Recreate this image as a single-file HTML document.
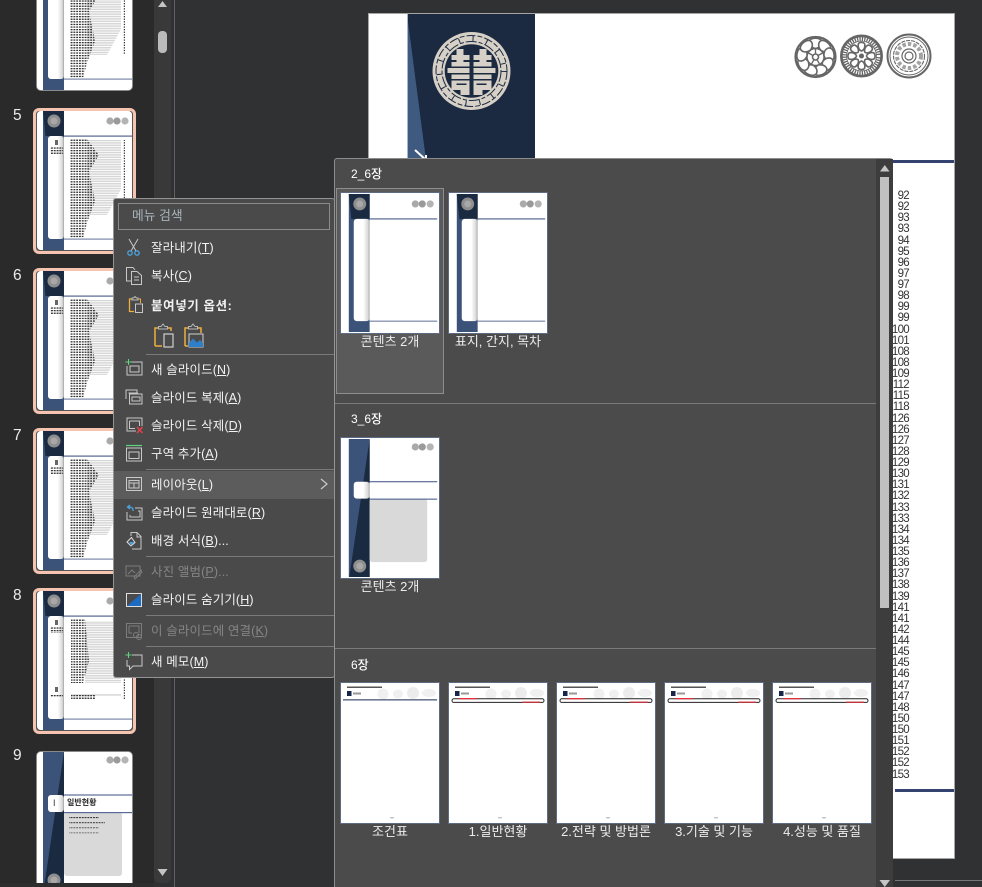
<!DOCTYPE html>
<html lang="ko"><head><meta charset="utf-8"><title>Layout</title>
<style>
html,body{margin:0;padding:0;width:982px;height:887px;overflow:hidden;background:#2f3133}
body{position:relative;font-family:"Liberation Sans","Noto Sans CJK KR",sans-serif}
div,svg,span{position:absolute;box-sizing:border-box}
svg{display:block;overflow:hidden}
.n{left:13px;color:#ececec;font-size:15.5px;line-height:18px;margin-top:1px}
.th{left:37px;width:95px;height:139px;background:#fff;border-radius:4px;overflow:hidden}
.sel{left:33px;width:103px;height:146px;border:3px solid #f5c4b1;border-radius:6px;background:#555}
.nosel{left:36px;width:97px;height:141px;border-radius:5px;background:#8a8a8a}
.m{left:151px;font-size:12.5px;line-height:18px;color:#f2f2f2;white-space:nowrap;margin-top:1px;letter-spacing:.12px}
.m.b{font-weight:700;letter-spacing:.6px}
.m.d{color:#858585}
.sp{left:146px;width:188px;height:1px;background:#7a7a7a}
.ic{left:124px;width:20px;height:20px;fill:none;stroke:#c8c8c8;stroke-width:1}
.h{left:351px;color:#fff;font-size:12px;line-height:16px;font-weight:500;white-space:nowrap;margin-top:1px}
.g{width:100px;height:142px;background:#fff;border:1px solid #5d6b84}
.g svg{left:1px;top:1px}
.l{width:108px;text-align:center;color:#ececec;font-size:13px;line-height:16px;white-space:nowrap;margin-top:1px}
.num{left:880px;width:29px;text-align:right;font-size:11.5px;line-height:11.13px;color:#333;white-space:pre-line;letter-spacing:-.7px}
</style></head><body>

<svg width="0" height="0" style="left:0;top:0">
<defs>
<linearGradient id="sh" x1="0" x2="1" y1="0" y2="0"><stop offset="0" stop-color="#fff"/><stop offset=".6" stop-color="#fff"/><stop offset=".9" stop-color="#d8d8d8"/><stop offset="1" stop-color="#a0a0a0"/></linearGradient>
<pattern id="pg" width="6" height="2.4" patternUnits="userSpaceOnUse"><rect width="6" height="1.5" fill="#d6d6d6"/></pattern>
<pattern id="pd" width="2.8" height="2.6" patternUnits="userSpaceOnUse"><rect width="1.9" height="1.300" fill="#333"/></pattern>
<symbol id="base" viewBox="0 0 95 139">
<rect width="95" height="139" fill="#fff"/>
<rect x="6" width="21" height="139" fill="#3b5378"/>
<path d="M6 0H27V25H8.500Z" fill="#1a2a40"/>
<rect x="11" y="25" width="16" height="103" rx="3" fill="url(#sh)"/>
<rect x="27" y="25" width="68" height="103" fill="#fff"/>
<rect x="27" y="24.500" width="68" height="1.200" fill="#56668f"/>
<rect x="27" y="127.500" width="68" height="1.200" fill="#7b88a8"/>
<circle cx="17" cy="10" r="6.500" fill="#8e8e8e"/><circle cx="17" cy="10" r="3.500" fill="#a8a8a8"/>
<circle cx="73" cy="10" r="3.600" fill="#aaa"/><circle cx="80" cy="10" r="3.600" fill="#9a9a9a"/><circle cx="88" cy="10" r="3.600" fill="#b4b4b4"/>
</symbol>
<symbol id="toc" viewBox="0 0 95 139">
<use href="#base" width="95" height="139"/>
<rect x="18" y="29" width="3" height="5" fill="#666"/>
<rect x="13" y="36" width="13" height="8" fill="url(#pd)"/>
<path d="M50 29H84V78L70 104H50Z" fill="url(#pg)"/>
<path d="M33 28H50L62 44 52 60 58 90 50 112 46 127H33Z" fill="url(#pd)"/>
<rect x="86" y="29" width="2" height="74" fill="url(#pd)"/>
</symbol>
<symbol id="toc2" viewBox="0 0 95 139">
<use href="#base" width="95" height="139"/>
<rect x="18" y="29" width="3" height="5" fill="#666"/>
<rect x="13" y="36" width="13" height="6" fill="url(#pd)"/>
<rect x="18" y="96" width="3" height="5" fill="#666"/>
<rect x="13" y="103" width="13" height="3" fill="url(#pd)"/>
<path d="M48 30H84V92H48Z" fill="url(#pg)"/>
<path d="M34 28H48L52 70 46 92H34Z" fill="url(#pd)"/>
<rect x="34" y="103" width="50" height="2" fill="url(#pg)"/>
<rect x="34" y="103" width="24" height="5" fill="url(#pd)"/>
<rect x="86" y="30" width="2" height="78" fill="url(#pd)"/>
</symbol>
<symbol id="sec" viewBox="0 0 95 139">
<rect width="95" height="139" fill="#fff"/>
<rect x="6" width="21" height="139" fill="#3b5378"/>
<path d="M27 0V139H6.500Z" fill="#1a2a40"/>
<rect x="27" y="60" width="58" height="64" rx="3" fill="#d9d9d9"/>
<rect x="11" y="43" width="16" height="17" rx="3" fill="url(#sh)"/>
<rect x="27" y="43" width="68" height="17" fill="#fff"/>
<rect x="27" y="42.400" width="68" height="1.200" fill="#5a6a98"/>
<rect x="27" y="60" width="68" height="1.200" fill="#5a6a98"/>
<circle cx="17" cy="128" r="6.500" fill="#8e8e8e"/><circle cx="17" cy="128" r="3.500" fill="#a8a8a8"/>
<circle cx="73" cy="8" r="3.600" fill="#aaa"/><circle cx="80" cy="8" r="3.600" fill="#9a9a9a"/><circle cx="88" cy="8" r="3.600" fill="#b4b4b4"/>
</symbol>
<symbol id="hj" viewBox="0 0 96 138">
<rect width="96" height="138" fill="#fff"/>
<rect x="5" y="2.500" width="35" height="1.500" fill="#555"/>
<rect x="5" y="7" width="4.500" height="5" fill="#16264a"/>
<rect x="11" y="8.500" width="8" height="2" fill="#999"/>
<circle cx="41" cy="10" r="5.500" fill="#f0f0f0"/><ellipse cx="56" cy="10" rx="5" ry="4.500" fill="#f0f0f0"/><circle cx="71" cy="9" r="6" fill="#ececec"/><ellipse cx="87" cy="9" rx="7" ry="4" fill="#f0f0f0"/>
<rect x="48" y="133" width="4" height="1.500" fill="#c8c8c8"/>
</symbol>
<g id="pet"><path d="M0-8.500C6-9.500 7.500-14 6-16.500 3.500-19.500-3.500-19.500-6-16.500-7.500-14-6-9.500 0-8.500Z" fill="#fff"/></g>
<g id="pet2"><path d="M0-5C3-6 4-10 3-12.500 1.500-14-1.500-14-3-12.500-4-10-3-6 0-5Z" fill="#fff"/></g>
</defs>
</svg>

<!-- left thumbnail panel -->
<div style="left:0;top:0;width:154px;height:887px;background:#2a2a2a"></div>
<div class="nosel" style="top:-50px"></div>
<svg class="th" style="top:-49px" viewBox="0 0 95 139"><use href="#toc" width="95" height="139"/></svg>

<div class="n" style="top:106px">5</div>
<div class="sel" style="top:108px"></div>
<svg class="th" style="top:111px" viewBox="0 0 95 139"><use href="#toc" width="95" height="139"/></svg>
<div class="n" style="top:266px">6</div>
<div class="sel" style="top:268px"></div>
<svg class="th" style="top:271px" viewBox="0 0 95 139"><use href="#toc" width="95" height="139"/></svg>
<div class="n" style="top:426px">7</div>
<div class="sel" style="top:428px"></div>
<svg class="th" style="top:431px" viewBox="0 0 95 139"><use href="#toc" width="95" height="139"/></svg>
<div class="n" style="top:586px">8</div>
<div class="sel" style="top:588px"></div>
<svg class="th" style="top:591px" viewBox="0 0 95 139"><use href="#toc2" width="95" height="139"/></svg>
<div class="n" style="top:746px">9</div>
<div class="nosel" style="top:751px"></div>
<svg class="th" style="top:752px" viewBox="0 0 95 139"><use href="#sec" width="95" height="139"/>
<rect x="32" y="65" width="30" height="1.200" fill="url(#pd)"/><rect x="32" y="70" width="36" height="1.200" fill="url(#pd)"/><rect x="32" y="75" width="30" height="1.200" fill="url(#pd)"/><rect x="32" y="80" width="30" height="1.200" fill="url(#pd)"/></svg>
<div style="left:53px;top:796px;font-size:9px;line-height:14px;color:#333">I</div>
<div style="left:67px;top:796px;font-size:8px;line-height:14px;font-weight:700;color:#222;white-space:nowrap">일반현황</div>
<div style="left:0;top:883px;width:154px;height:4px;background:#2e2e2e"></div>

<!-- left scrollbar -->
<div style="left:154px;top:0;width:17px;height:883px;background:#393939;border-radius:0 0 6px 6px"></div>
<svg style="left:154px;top:0" width="17" height="10"><path d="M4 7H13L8.500 1Z" fill="#c4c4c4"/></svg>
<div style="left:158px;top:31px;width:9px;height:22px;background:#bbb;border-radius:4px"></div>
<svg style="left:154px;top:868px" width="17" height="10"><path d="M3.500 1H13.500L8.500 8Z" fill="#c4c4c4"/></svg>
<div style="left:174px;top:0;width:1px;height:887px;background:#5e6062"></div>

<!-- slide -->
<div style="left:368px;top:13px;width:587px;height:846px;background:#fff;border:1px solid #a5a5a5"></div>
<svg style="left:407px;top:14px" width="128" height="146" viewBox="0 0 128 146">
<rect width="128" height="146" fill="#1b2a40"/><path d="M0 0 19 146H0Z" fill="#3f5a80"/><rect width="1" height="146" fill="#a9b6c8"/>
<path d="M8 136 19 146M19 146V141" stroke="#fff" stroke-width="2" fill="none"/>
</svg>
<svg style="left:431px;top:31px" width="81" height="80" viewBox="-40.500 -40 81 80">
<defs><g id="hl" fill="#d6d0c6">
<rect x="-15" y="-22" width="7" height="6"/>
<rect x="-20" y="-16" width="18" height="5"/>
<rect x="-15" y="-11" width="7" height="2"/>
<rect x="-20" y="-9" width="18" height="4.500"/>
<rect x="-24" y="-3" width="22" height="5"/>
<rect x="-20" y="3.500" width="18" height="4.500"/>
<rect x="-20" y="9.500" width="18" height="9.500"/>
<rect x="-11" y="19" width="9" height="5"/>
</g></defs>
<circle r="39" fill="#d6d0c6"/>
<circle r="35.500" fill="none" stroke="#1b2a40" stroke-width="1" stroke-dasharray="9 2 5 2"/>
<circle r="32.500" fill="none" stroke="#1b2a40" stroke-width="5" stroke-dasharray="1 13"/>
<circle r="29.500" fill="none" stroke="#1b2a40" stroke-width="1" stroke-dasharray="11 2 4 2"/>
<circle r="26.800" fill="#1b2a40"/>
<use href="#hl"/><use href="#hl" transform="scale(-1 1)"/>
<rect x="-15" y="12.500" width="10" height="1.500" fill="#1b2a40"/><rect x="5" y="12.500" width="10" height="1.500" fill="#1b2a40"/>
</svg>
<!-- rosettes -->
<svg style="left:790px;top:30px" width="146" height="52" viewBox="0 0 146 52" fill="none" stroke="#666" stroke-width="1.600">
<g transform="translate(25.500 27)">
<circle r="20" stroke-width="2.200"/>
<use href="#pet"/><use href="#pet" transform="rotate(40)"/><use href="#pet" transform="rotate(80)"/><use href="#pet" transform="rotate(120)"/><use href="#pet" transform="rotate(160)"/><use href="#pet" transform="rotate(200)"/><use href="#pet" transform="rotate(240)"/><use href="#pet" transform="rotate(280)"/><use href="#pet" transform="rotate(320)"/>
<circle r="8.500" stroke-width="1.400"/><circle r="3"/>
<path d="M0-8V-3M7-4 2.600-1.500M4 7 1.500 2.600M-4 7-1.500 2.600M-7-4-2.600-1.500" stroke-width="1.300"/>
</g>
<g transform="translate(71.500 26)">
<circle r="21" fill="#666" stroke-width="1"/><circle r="17" stroke="#fff" stroke-width="3.500" stroke-dasharray="1.100 1.300"/><circle r="14.500" fill="#fff" stroke-width="0"/>
<use href="#pet2"/><use href="#pet2" transform="rotate(45)"/><use href="#pet2" transform="rotate(90)"/><use href="#pet2" transform="rotate(135)"/><use href="#pet2" transform="rotate(180)"/><use href="#pet2" transform="rotate(225)"/><use href="#pet2" transform="rotate(270)"/><use href="#pet2" transform="rotate(315)"/>
<circle r="2.500" fill="#666" stroke-width="0"/>
</g>
<g transform="translate(119 26)">
<circle r="21.500" stroke-width="2"/><circle r="19" stroke-width="1"/><circle r="4" stroke-width="1.200"/><circle r="7" stroke-width="1.200"/><circle r="15.500" stroke-width="1.100" stroke-dasharray="4 1"/>
<circle r="12" stroke-width="4" stroke-dasharray="3.500 2" stroke="#666" opacity=".6"/>
</g>
</svg>
<div style="left:893px;top:160px;width:61px;height:3px;background:#34426f"></div>
<div style="left:895px;top:789px;width:59px;height:3px;background:#34426f"></div>
<div class="num" style="top:191px">92
92
93
93
94
95
96
97
97
98
99
99
100
101
108
108
109
112
115
118
126
126
127
128
129
130
131
132
133
133
134
134
135
136
137
138
139
141
141
142
144
145
145
146
147
147
148
150
150
151
152
152
153</div>
<div style="left:895px;top:880px;width:87px;height:1px;background:#777"></div>

<!-- gallery popup -->
<div style="left:334px;top:158px;width:559px;height:729px;background:#4b4b4b;border-top:1px solid #8c8c8c;border-left:1px solid #8c8c8c;border-right:1px solid #555;border-radius:3px 3px 0 0"></div>
<div style="left:876px;top:159px;width:17px;height:728px;background:#3d3d3d"></div>
<svg style="left:876px;top:159px" width="17" height="14"><path d="M4 12.500H13.500L8.800 6Z" fill="#c6c6c6"/></svg>
<div style="left:880px;top:177px;width:9px;height:431px;background:#c0c0c0"></div>
<svg style="left:876px;top:877px" width="17" height="10"><path d="M3.500 3H14L8.800 10Z" fill="#c6c6c6"/></svg>

<div class="h" style="top:165px">2_6장</div>
<div style="left:336px;top:188px;width:108px;height:206px;background:#5a5a5a;border:1px solid #8d8d8d"></div>
<div class="g" style="left:340px;top:192px"><svg width="96" height="138"><use href="#base" width="96" height="138"/></svg></div>
<div class="g" style="left:448px;top:192px"><svg width="96" height="138"><use href="#base" width="96" height="138"/></svg></div>
<div class="l" style="left:336px;top:333px">콘텐츠 2개</div>
<div class="l" style="left:444px;top:333px">표지, 간지, 목차</div>
<div style="left:335px;top:403px;width:541px;height:1px;background:#7a7a7a"></div>

<div class="h" style="top:410px">3_6장</div>
<div class="g" style="left:340px;top:437px"><svg width="96" height="138"><use href="#sec" width="96" height="138"/></svg></div>
<div class="l" style="left:336px;top:578px">콘텐츠 2개</div>
<div style="left:335px;top:648px;width:541px;height:1px;background:#7a7a7a"></div>

<div class="h" style="top:656px">6장</div>
<div class="g" style="left:340px;top:682px"><svg width="96" height="138"><use href="#hj" width="96" height="138"/><rect x="1" y="15.200" width="94" height="1.300" fill="#4d5878"/></svg></div>
<div class="g" style="left:448px;top:682px"><svg width="96" height="138"><use href="#hj" width="96" height="138"/><rect x="2" y="14.800" width="92" height="3.600" rx="1.800" fill="none" stroke="#222" stroke-width="1"/><rect x="9" y="14" width="18" height="1.300" fill="#e0303a"/><rect x="72" y="17.600" width="18" height="1.300" fill="#c8303a"/></svg></div>
<div class="g" style="left:556px;top:682px"><svg width="96" height="138"><use href="#hj" width="96" height="138"/><rect x="2" y="14.800" width="92" height="3.600" rx="1.800" fill="none" stroke="#222" stroke-width="1"/><rect x="9" y="14" width="18" height="1.300" fill="#e0303a"/><rect x="72" y="17.600" width="18" height="1.300" fill="#c8303a"/></svg></div>
<div class="g" style="left:664px;top:682px"><svg width="96" height="138"><use href="#hj" width="96" height="138"/><rect x="2" y="14.800" width="92" height="3.600" rx="1.800" fill="none" stroke="#222" stroke-width="1"/><rect x="9" y="14" width="18" height="1.300" fill="#e0303a"/><rect x="72" y="17.600" width="18" height="1.300" fill="#c8303a"/></svg></div>
<div class="g" style="left:772px;top:682px"><svg width="96" height="138"><use href="#hj" width="96" height="138"/><rect x="2" y="14.800" width="92" height="3.600" rx="1.800" fill="none" stroke="#222" stroke-width="1"/><rect x="9" y="14" width="18" height="1.300" fill="#e0303a"/><rect x="72" y="17.600" width="18" height="1.300" fill="#c8303a"/></svg></div>
<div class="l" style="left:336px;top:823px">조건표</div>
<div class="l" style="left:444px;top:823px">1.일반현황</div>
<div class="l" style="left:552px;top:823px">2.전략 및 방법론</div>
<div class="l" style="left:660px;top:823px">3.기술 및 기능</div>
<div class="l" style="left:768px;top:823px">4.성능 및 품질</div>

<!-- context menu -->
<div style="left:113px;top:198px;width:222px;height:480px;background:#4a4a4a;border:1px solid #949494;border-radius:3px"></div>
<div style="left:118px;top:203px;width:212px;height:27px;border:1px solid #8a8a8a"></div>
<div style="left:132px;top:208px;font-size:12.8px;line-height:16px;color:#a8b4bc;white-space:nowrap">메뉴 검색</div>

<div class="m" style="top:238px">잘라내기(<u>T</u>)</div>
<div class="m" style="top:266px">복사(<u>C</u>)</div>
<div class="m b" style="top:296px">붙여넣기 옵션:</div>
<div class="sp" style="top:354px"></div>
<div class="m" style="top:360px">새 슬라이드(<u>N</u>)</div>
<div class="m" style="top:388px">슬라이드 복제(<u>A</u>)</div>
<div class="m" style="top:416px">슬라이드 삭제(<u>D</u>)</div>
<div class="m" style="top:444px">구역 추가(<u>A</u>)</div>
<div class="sp" style="top:469px"></div>
<div style="left:114px;top:471px;width:220px;height:28px;background:#5c5c5c"></div>
<div class="m" style="top:475px">레이아웃(<u>L</u>)</div>
<svg style="left:319px;top:478px" width="10" height="12"><path d="M2 1 8 6 2 11" fill="none" stroke="#c8c8c8" stroke-width="1.200"/></svg>
<div class="m" style="top:503px">슬라이드 원래대로(<u>R</u>)</div>
<div class="m" style="top:531px">배경 서식(<u>B</u>)...</div>
<div class="sp" style="top:556px"></div>
<div class="m d" style="top:562px">사진 앨범(<u>P</u>)...</div>
<div class="m" style="top:590px">슬라이드 숨기기(<u>H</u>)</div>
<div class="sp" style="top:615px"></div>
<div class="m d" style="top:621px">이 슬라이드에 연결(<u>K</u>)</div>
<div class="sp" style="top:646px"></div>
<div class="m" style="top:652px">새 메모(<u>M</u>)</div>

<!-- menu icons -->
<svg class="ic" style="top:238px" viewBox="0 0 20 20"><path d="M5 1 12 13M14 1 7 13"/><circle cx="6" cy="15" r="2.200" stroke="#4aa3e0" stroke-width="1.300"/><circle cx="13" cy="15" r="2.200" stroke="#4aa3e0" stroke-width="1.300"/></svg>
<svg class="ic" style="top:266px" viewBox="0 0 20 20"><path d="M7 15H2.500V1.500H9L11 4"/><path d="M7.500 5.500H13L17.500 9.500V18.500H7.500Z"/><path d="M10 11H15M10 14H15"/></svg>
<svg class="ic" style="top:295px;left:126px" viewBox="0 0 20 20"><path d="M12 4H14.500V8" stroke="#f0ae3c"/><path d="M8 16.500H3.500V4H6" stroke="#f0ae3c" stroke-width="1.300"/><path d="M6 5V3H7.500L9 1.500 10.500 3H12V5Z" stroke="#bbb"/><rect x="9.500" y="9" width="7" height="8.500"/></svg>
<svg style="left:152px;top:323px;fill:none" width="24" height="26" viewBox="0 0 24 26"><path d="M3 23V5H6M16 5H19V8" stroke="#f0ae3c" stroke-width="1.500"/><path d="M3 23H10" stroke="#f0ae3c" stroke-width="1.500"/><path d="M6.500 6V3.500H9L11 1 13 3.500H15.500V6Z" stroke="#b8b8b8"/><rect x="12" y="11" width="9" height="13" stroke="#d0d0d0" stroke-width="1.200"/></svg>
<svg style="left:182px;top:323px;fill:none" width="24" height="26" viewBox="0 0 24 26"><path d="M3 23V5H6M16 5H19V10" stroke="#f0ae3c" stroke-width="1.500"/><path d="M3 23H6" stroke="#f0ae3c" stroke-width="1.500"/><path d="M6.500 6V3.500H9L11 1 13 3.500H15.500V6Z" stroke="#b8b8b8"/><rect x="7" y="11" width="14" height="13" stroke="#d0d0d0"/><path d="M7 24V20L11 15.500 15 19.500 18 17 21 20V24Z" fill="#2f7fc8"/></svg>
<svg class="ic" style="top:358px" viewBox="0 0 20 20"><path d="M7 4H18V17H3V8"/><path d="M6 8H15V14H6Z"/><path d="M4.500 1V7M1.500 4H7.500" stroke="#5fd47f"/></svg>
<svg class="ic" style="top:387px" viewBox="0 0 20 20"><path d="M2 12V3H13V6"/><path d="M4.500 6H14"/><rect x="5.500" y="7" width="12.500" height="10"/><rect x="8" y="10" width="8" height="4"/></svg>
<svg class="ic" style="top:415px" viewBox="0 0 20 20"><path d="M12 16H3V3H18V11"/><path d="M5.500 6H15.500V11M5.500 6V13.500H11"/><path d="M13 12 18.500 18M18.500 12 13 18" stroke="#e8404a" stroke-width="1.400"/></svg>
<svg class="ic" style="top:444px" viewBox="0 0 20 20"><path d="M2 1.500H18" stroke="#5fd47f" stroke-width="1.200"/><rect x="2.500" y="4" width="15" height="13"/><rect x="5" y="8" width="10" height="6.500"/></svg>
<svg class="ic" style="top:475px" viewBox="0 0 20 20"><rect x="2.500" y="2.500" width="15" height="13"/><path d="M5 5.500H15V13H5ZM5 8H15M10 8V13"/></svg>
<svg class="ic" style="top:504px" viewBox="0 0 20 20"><path d="M3 8V16H18V4H11"/><path d="M14 7H16V13H6V11"/><path d="M9 7V5.500C9 3.500 7 3 4 3M6 1 3.500 3 6 5" stroke="#4aa3e0" stroke-width="1.300"/></svg>
<svg class="ic" style="top:531px" viewBox="0 0 20 20"><path d="M7 5V1.500H13L17 5.500V18H8"/><path d="M13 2V6H17"/><path d="M7.500 6.500 3 11 7 15 11 11.500Z" stroke="#ddd"/><path d="M5 11H10L7.500 14.500Z" fill="#4aa3e0" stroke="none"/></svg>
<svg class="ic" style="top:562px;stroke:#7c7c7c" viewBox="0 0 20 20"><rect x="2" y="4" width="14" height="10"/><path d="M4 12 8 8 11 11M11 17 18 10 17 8 10 15Z"/></svg>
<svg class="ic" style="top:590px" viewBox="0 0 20 20"><rect x="2.500" y="3.500" width="15" height="13" stroke="#ddd"/><path d="M3 16 17 4V16Z" fill="#1d6cc4" stroke="none"/></svg>
<svg class="ic" style="top:621px;stroke:#7c7c7c" viewBox="0 0 20 20"><rect x="2.500" y="2.500" width="15" height="14"/><path d="M5 5H15V12M5 5V12H8"/><circle cx="12" cy="14" r="2.500"/><circle cx="15" cy="16" r="2.500"/></svg>
<svg class="ic" style="top:651px" viewBox="0 0 20 20"><path d="M8 4H18V15H9L5.500 18.500V15H3V9"/><path d="M4.500 1V7M1.500 4H7.500" stroke="#5fd47f"/></svg>

</body></html>
